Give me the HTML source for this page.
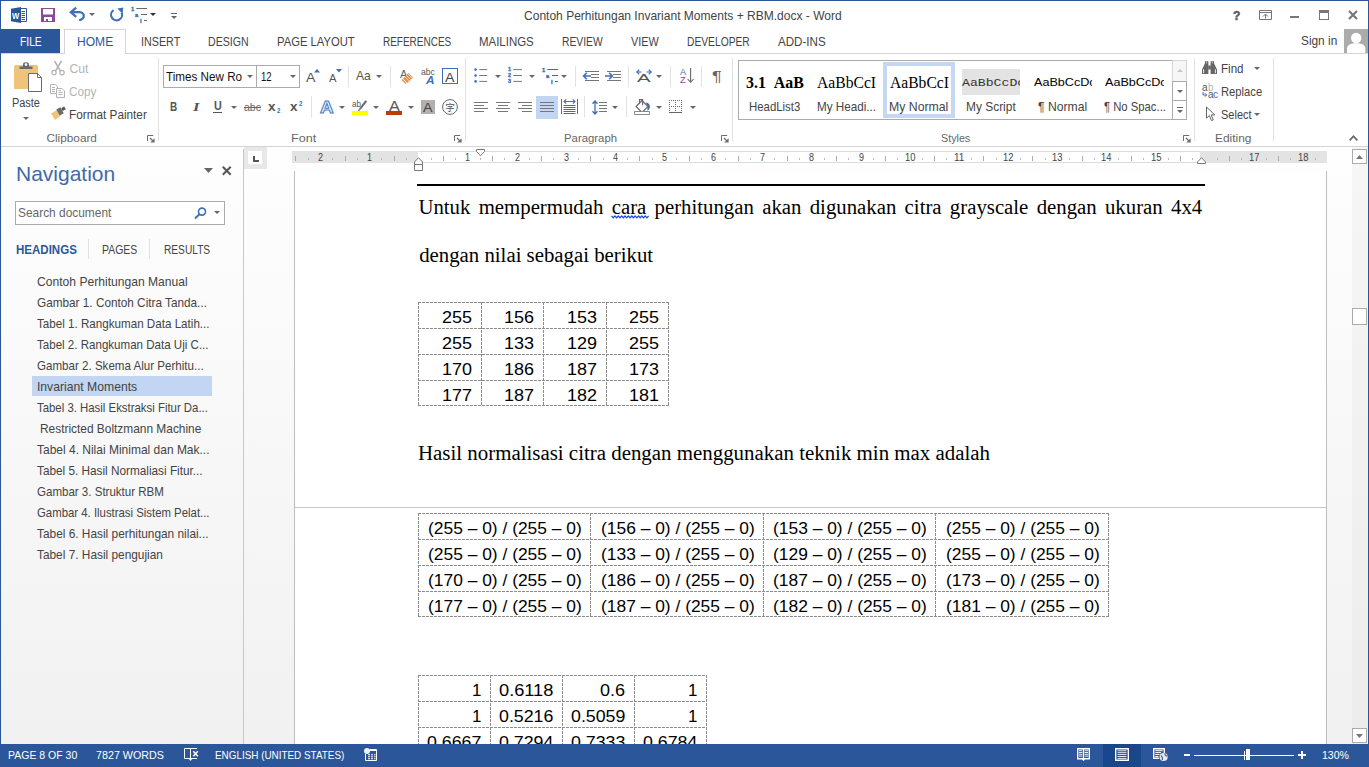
<!DOCTYPE html>
<html lang="en">
<head>
<meta charset="utf-8">
<title>Contoh Perhitungan Invariant Moments + RBM.docx - Word</title>
<style>
*{box-sizing:border-box;margin:0;padding:0}
html,body{width:1369px;height:767px;overflow:hidden;background:#fff}
body{font-family:"Liberation Sans",sans-serif;font-size:12px;color:#444;position:relative}
#win{position:absolute;left:0;top:0;width:1369px;height:767px;overflow:hidden;background:#fff}
.abs{position:absolute}
.t{position:absolute;white-space:nowrap;line-height:16px;height:16px;color:#444;transform-origin:0 50%}
svg{position:absolute;overflow:visible}
.dd{position:absolute;width:0;height:0;border-style:solid;border-color:transparent;border-bottom-width:0}
.gsep{position:absolute;top:58px;width:1px;height:83px;background:#e1e1e1}
.isep{position:absolute;width:1px;height:21px;background:#e1e1e1}
.dash{position:absolute;border:1px dashed #8c8c8c}
.cell{position:absolute;color:#000;white-space:nowrap;text-align:right}
</style>
</head>
<body>
<div id="win">
<!-- TITLE BAR -->
<div id="titlebar">
<div class="t" id="x1" style="left:524.134px;top:8.00px;font-size:12.2px;transform:scaleX(0.9871);">Contoh Perhitungan Invariant Moments + RBM.docx - Word</div>
<svg style="left:11px;top:7px" width="16" height="16" viewBox="0 0 16 16"><path d="M10 1.5H15.5V14.5H10" fill="#fff" stroke="#2b579a" stroke-width="1"/><path d="M10.5 4.5H14M10.5 6.5H14M10.5 8.5H14M10.5 10.5H14M10.5 12.5H14" stroke="#2b579a" stroke-width="1"/><path d="M0 1.7L10 0V16L0 14.3Z" fill="#2b579a"/></svg>
<div class="t" id="x2" style="left:12.4px;top:8.00px;font-size:8.6px;color:#fff;font-weight:bold;transform:scaleX(0.8862);">W</div>
<svg style="left:41px;top:8px" width="14" height="14" viewBox="0 0 14 14"><path d="M0 0H14V14H0Z" fill="#8a4a96"/><path d="M2 1H12V6.5H2Z" fill="#fff"/><path d="M3 9H11V13H3Z" fill="#fff"/><path d="M5 11H7V13H5Z" fill="#8a4a96"/></svg>
<svg style="left:70px;top:7px" width="16" height="15" viewBox="0 0 16 15"><path d="M2.2 5.2H9.5C12.6 5.2 13.8 7.4 13.8 9C13.8 11.4 11.6 12.6 9.2 13.2" fill="none" stroke="#3f6fb6" stroke-width="2.2"/><path d="M6.2 0.6L0.8 5.2L6.2 9.8" fill="none" stroke="#3f6fb6" stroke-width="2.2"/></svg>
<div class="dd" style="left:89.4px;top:12.8px;border-top-color:#666;border-left-width:3px;border-right-width:3px;border-top-width:3px"></div>
<svg style="left:109px;top:7px" width="16" height="15" viewBox="0 0 16 15"><path d="M4.6 3.2A5.5 5.5 0 1 0 12.6 5.6" fill="none" stroke="#3f6fb6" stroke-width="2.1"/><path d="M8.3 1.5L14.3 0.5L13.5 6.8Z" fill="#3f6fb6"/></svg>
<svg style="left:130px;top:6px" width="17" height="17" viewBox="0 0 17 17"><path d="M6.3 2.5H17M11 8.5H17M14 14.5H17" stroke="#666" stroke-width="1"/></svg>
<div class="t" id="x3" style="left:130.6px;top:1.00px;font-size:5.6px;color:#3f6fb6;font-weight:bold;transform:scaleX(1.0240);-webkit-text-stroke:0.35px #3f6fb6;">1</div>
<div class="t" id="x4" style="left:135px;top:7.00px;font-size:5.8px;color:#3f6fb6;font-weight:bold;transform:scaleX(0.9894);-webkit-text-stroke:0.35px #3f6fb6;">a</div>
<div class="t" id="x5" style="left:139.8px;top:13.00px;font-size:5.8px;color:#3f6fb6;font-weight:bold;transform:scaleX(0.9846);-webkit-text-stroke:0.35px #3f6fb6;">i</div>
<div class="dd" style="left:150.4px;top:12.8px;border-top-color:#333;border-left-width:3px;border-right-width:3px;border-top-width:3px"></div>
<div class="abs" style="left:171px;top:13px;width:6px;height:1px;background:#666;"></div>
<div class="dd" style="left:171px;top:16px;border-top-color:#666;border-left-width:3px;border-right-width:3px;border-top-width:3px"></div>
<div class="t" id="x6" style="left:1233px;top:7.00px;font-size:13.5px;color:#5a5a5a;font-weight:bold;line-height:17px;height:17px;transform:scaleX(0.8970);-webkit-text-stroke:0.5px #5a5a5a;">?</div>
<svg style="left:1259px;top:10px" width="13" height="10" viewBox="0 0 13 10"><path d="M0.5 0.5H12.5V9.5H0.5Z" fill="#fff" stroke="#777" stroke-width="1"/><path d="M0.5 2.5H12.5" stroke="#777"/><path d="M6.5 8.5V4.5M4 6.5L6.5 4L9 6.5" fill="none" stroke="#777" stroke-width="1"/></svg>
<div class="abs" style="left:1290px;top:16px;width:9px;height:2px;background:#777;"></div>
<div class="abs" style="left:1319px;top:10px;width:10px;height:10px;border:1px solid #777;border-top-width:3px;"></div>
<svg style="left:1348px;top:10px" width="10" height="10" viewBox="0 0 10 10"><path d="M1 1L9 9M9 1L1 9" stroke="#777" stroke-width="2.2"/></svg>
</div>
<!-- TABS -->
<div id="tabs">
<div class="abs" style="left:0px;top:29px;width:60px;height:24px;background:#2b579a;"></div>
<div class="abs" style="left:0px;top:53px;width:1369px;height:1px;background:#d4d4d4;"></div>
<div class="abs" style="left:64px;top:29px;width:62px;height:25px;background:#fff;border:1px solid #d4d4d4;border-bottom:0;"></div>
<div class="t" id="x7" style="left:19.64px;top:34.00px;font-size:12px;color:#fff;transform:scaleX(0.8570);">FILE</div>
<div class="t" id="x8" style="left:76.64px;top:34.00px;font-size:12px;color:#2b579a;transform:scaleX(1.0061);">HOME</div>
<div class="t" id="x9" style="left:140.64px;top:34.00px;font-size:12px;transform:scaleX(0.8955);">INSERT</div>
<div class="t" id="x10" style="left:207.64px;top:34.00px;font-size:12px;transform:scaleX(0.8849);">DESIGN</div>
<div class="t" id="x11" style="left:276.64px;top:34.00px;font-size:12px;transform:scaleX(0.9373);">PAGE LAYOUT</div>
<div class="t" id="x12" style="left:382.64px;top:34.00px;font-size:12px;transform:scaleX(0.8318);">REFERENCES</div>
<div class="t" id="x13" style="left:478.64px;top:34.00px;font-size:12px;transform:scaleX(0.9540);">MAILINGS</div>
<div class="t" id="x14" style="left:561.64px;top:34.00px;font-size:12px;transform:scaleX(0.8601);">REVIEW</div>
<div class="t" id="x15" style="left:630.64px;top:34.00px;font-size:12px;transform:scaleX(0.9038);">VIEW</div>
<div class="t" id="x16" style="left:686.64px;top:34.00px;font-size:12px;transform:scaleX(0.8550);">DEVELOPER</div>
<div class="t" id="x17" style="left:777.64px;top:34.00px;font-size:12px;transform:scaleX(0.9671);">ADD-INS</div>
<div class="t" id="x18" style="left:1300.63px;top:33.00px;font-size:12.3px;transform:scaleX(0.9635);">Sign in</div>
<svg style="left:1344px;top:29px" width="24" height="24" viewBox="0 0 24 24"><path d="M0 0H24V24H0Z" fill="#ababab"/><circle cx="12.2" cy="9" r="5.2" fill="#fff"/><path d="M3 24V20C3 15.5 7 14.2 12.2 14.2C17.4 14.2 21.4 15.5 21.4 20V24Z" fill="#fff"/></svg>
</div>
<!-- RIBBON -->
<div id="ribbon">
<div class="abs" style="left:0px;top:146px;width:1369px;height:1px;background:#d4d4d4;"></div>
<div id="grp-clipboard">
<svg style="left:13px;top:61px" width="30" height="32" viewBox="0 0 30 32"><path d="M1 5.5Q1 4 2.5 4H23.5Q25 4 25 5.5V28H1Z" fill="#f0c37a"/><path d="M6.5 8V5.5H10V3.5Q10 1.2 13 1.2Q16 1.2 16 3.5V5.5H19.5V8Z" fill="#6b6b6b"/><circle cx="13" cy="3.6" r="1.3" fill="#fff"/><path d="M15.5 12.5H24.5L28.5 16.5V30.5H15.5Z" fill="#fff" stroke="#6b6b6b" stroke-width="1"/><path d="M24.5 12.5V16.5H28.5" fill="none" stroke="#6b6b6b" stroke-width="1"/></svg>
<div class="t" id="x19" style="left:12.431px;top:95.00px;font-size:12.3px;transform:scaleX(0.8882);">Paste</div>
<div class="dd" style="left:22.7px;top:116.8px;border-top-color:#666;border-left-width:3px;border-right-width:3px;border-top-width:3px"></div>
<svg style="left:50px;top:60px" width="16" height="16" viewBox="0 0 16 16"><path d="M4.5 1L10.5 11M11.5 1L5.5 11" stroke="#b4b4b4" stroke-width="1.5" fill="none"/><circle cx="4" cy="12.6" r="2.2" fill="none" stroke="#b4b4b4" stroke-width="1.2"/><circle cx="12" cy="12.6" r="2.2" fill="none" stroke="#b4b4b4" stroke-width="1.2"/></svg>
<div class="t" id="x20" style="left:69.434px;top:61.00px;font-size:12.2px;color:#b4b4b4;">Cut</div>
<svg style="left:50px;top:84px" width="16" height="15" viewBox="0 0 16 15"><path d="M6.5 9.5H0.5V0.5H5.5L7.5 2.5V4" fill="none" stroke="#b4b4b4"/><path d="M2 3.5H5M2 5.5H5M2 7.5H5" stroke="#b4b4b4"/><path d="M6.5 4.5H12L14.5 7V13.5H6.5Z" fill="#fff" stroke="#b4b4b4"/><path d="M8.5 8.5H12.5M8.5 10.5H12.5M8.5 6.5H11" stroke="#b4b4b4"/></svg>
<div class="t" id="x21" style="left:69.434px;top:84.00px;font-size:12.2px;color:#b4b4b4;transform:scaleX(0.9641);">Copy</div>
<svg style="left:50px;top:106px" width="17" height="15" viewBox="0 0 17 15"><path d="M1 7.5L7 4L10.5 10L5 14Z" fill="#f0c37a"/><path d="M6.3 3.6L10.3 1.3L13.8 7.3L9.8 9.6Z" fill="#6b6b6b"/><path d="M11.2 2.2L14.2 0.4L15.8 3.2L12.8 5Z" fill="#555"/></svg>
<div class="t" id="x22" style="left:69.434px;top:107.00px;font-size:12.2px;transform:scaleX(0.9655);">Format Painter</div>
<div class="t" id="x23" style="left:46.446px;top:130.00px;font-size:11.8px;color:#666;">Clipboard</div>
<svg style="left:147px;top:135px" width="8" height="8" viewBox="0 0 8 8"><path d="M0.5 6V0.5H6.2" fill="none" stroke="#6e6e6e"/><path d="M3 3L6 6" stroke="#6e6e6e" stroke-width="1.2"/><path d="M7.6 3.2V7.6H3.2Z" fill="#6e6e6e"/></svg>
<div class="gsep" style="left:158px"></div>
</div>
<div id="grp-font">
<div class="abs" style="left:163px;top:65px;width:94px;height:23px;background:#fff;border:1px solid #ababab;"></div>
<div class="abs" style="left:256px;top:65px;width:44px;height:23px;background:#fff;border:1px solid #ababab;"></div>
<div class="t" id="x24" style="left:165.828px;top:69.00px;font-size:12.4px;color:#111;transform:scaleX(0.9414);">Times New Ro</div>
<div class="dd" style="left:246.5px;top:75px;border-top-color:#666;border-left-width:3px;border-right-width:3px;border-top-width:3px"></div>
<div class="t" id="x25" style="left:261px;top:69.00px;font-size:12.4px;color:#111;transform:scaleX(0.7683);">12</div>
<div class="dd" style="left:289.5px;top:75px;border-top-color:#666;border-left-width:3px;border-right-width:3px;border-top-width:3px"></div>
<div class="t" id="x26" style="left:306.2px;top:69.00px;font-size:13.2px;color:#555;line-height:17px;height:17px;transform:scaleX(1.0686);">A</div>
<svg style="left:314px;top:69px" width="6" height="3.5" viewBox="0 0 6 3.5"><path d="M0 3.5L3 0L6 3.5Z" fill="#3f6fb6"/></svg>
<div class="t" id="x27" style="left:329.2px;top:70.00px;font-size:10.4px;color:#555;line-height:17px;height:17px;transform:scaleX(1.0811);">A</div>
<svg style="left:336px;top:69px" width="6" height="3.5" viewBox="0 0 6 3.5"><path d="M0 0H6L3 3.5Z" fill="#3f6fb6"/></svg>
<div class="isep" style="left:348px;top:66px"></div>
<div class="t" id="x28" style="left:356.3px;top:68.00px;font-size:12.6px;color:#555;transform:scaleX(0.9671);">Aa</div>
<div class="dd" style="left:375.6px;top:75px;border-top-color:#666;border-left-width:3px;border-right-width:3px;border-top-width:3px"></div>
<div class="isep" style="left:390px;top:66px"></div>
<div class="t" id="x29" style="left:399.5px;top:66.00px;font-size:10.5px;color:#666;transform:scaleX(1.0690);">A</div>
<svg style="left:401px;top:71px" width="13" height="13" viewBox="0 0 13 13"><path d="M7.5 2L12 6.5L6.5 12L2 7.5Z" fill="#e8914a"/><path d="M5.5 4.5L9.5 8.5M4 6L8 10M7 3L11 7" stroke="#fff" stroke-width="0.6"/><path d="M1 8.5L5 12.5" stroke="#e8914a" stroke-width="1.4"/></svg>
<div class="t" id="x30" style="left:420.712px;top:63.00px;font-size:9.6px;color:#555;line-height:17px;height:17px;transform:scaleX(0.8906);">abc</div>
<div class="t" id="x31" style="left:426px;top:72.00px;font-size:11.5px;color:#3f6fb6;font-weight:bold;font-style:italic;transform:scaleX(1.0226);">A</div>
<div class="abs" style="left:442px;top:68px;width:16px;height:16px;background:#fff;border:1px solid #3f6fb6;"></div>
<div class="t" id="x32" style="left:445.3px;top:69.00px;font-size:13px;line-height:17px;height:17px;transform:scaleX(1.0955);">A</div>
<div class="gsep" style="left:465px"></div>
<div class="t" id="x33" style="left:169.8px;top:99.00px;font-size:12.4px;color:#555;font-weight:bold;transform:scaleX(0.8042);">B</div>
<div class="t" id="x34" style="left:192.5px;top:99.00px;font-size:12.6px;color:#555;font-weight:bold;font-style:italic;font-family:'Liberation Serif',serif;transform:scaleX(1.3248);">I</div>
<div class="t" id="x35" style="left:213.6px;top:98.00px;font-size:12px;color:#555;font-weight:bold;transform:scaleX(0.8995);">U</div>
<div class="abs" style="left:213.3px;top:112px;width:8.6px;height:1px;background:#555;"></div>
<div class="dd" style="left:231.3px;top:106px;border-top-color:#666;border-left-width:3px;border-right-width:3px;border-top-width:3px"></div>
<div class="t" id="x36" style="left:243.658px;top:99.00px;font-size:11.4px;color:#666;transform:scaleX(0.9189);">abc</div>
<div class="abs" style="left:243.5px;top:107px;width:17.5px;height:1px;background:#666;"></div>
<div class="t" id="x37" style="left:268px;top:98.00px;font-size:13.5px;color:#555;font-weight:bold;line-height:17px;height:17px;">x</div>
<div class="t" id="x38" style="left:277px;top:102.00px;font-size:6.5px;color:#3f6fb6;font-weight:bold;line-height:17px;height:17px;transform:scaleX(0.9379);">2</div>
<div class="t" id="x39" style="left:290px;top:98.00px;font-size:13.5px;color:#555;font-weight:bold;line-height:17px;height:17px;">x</div>
<div class="t" id="x40" style="left:299px;top:95.00px;font-size:6.5px;color:#3f6fb6;font-weight:bold;line-height:17px;height:17px;transform:scaleX(0.9379);">2</div>
<div class="isep" style="left:311px;top:96px"></div>
<div class="t" id="x41" style="left:320.2px;top:96.00px;font-size:17px;color:#fff;font-weight:bold;line-height:23px;height:23px;transform:scaleX(1.1074);-webkit-text-stroke:1px #4a7ac0;">A</div>
<div class="dd" style="left:338.6px;top:106.1px;border-top-color:#666;border-left-width:3px;border-right-width:3px;border-top-width:3px"></div>
<div class="t" id="x42" style="left:352px;top:95.00px;font-size:9.6px;color:#555;line-height:17px;height:17px;transform:scaleX(0.8433);">ab</div>
<svg style="left:355px;top:100px" width="13" height="12" viewBox="0 0 13 12"><path d="M11.2 0.8L5 9" stroke="#666" stroke-width="2"/><path d="M5.5 8.3L3.2 11.2" stroke="#888" stroke-width="1.6"/></svg>
<div class="abs" style="left:352px;top:111px;width:16px;height:4px;background:#ffff00;"></div>
<div class="dd" style="left:373.4px;top:106.1px;border-top-color:#666;border-left-width:3px;border-right-width:3px;border-top-width:3px"></div>
<div class="t" id="x43" style="left:388.6px;top:98.00px;font-size:14px;color:#555;transform:scaleX(1.1559);">A</div>
<div class="abs" style="left:386px;top:111px;width:16px;height:4px;background:#c03a0e;"></div>
<div class="dd" style="left:407.5px;top:106.1px;border-top-color:#666;border-left-width:3px;border-right-width:3px;border-top-width:3px"></div>
<div class="abs" style="left:421px;top:100px;width:14px;height:14px;background:#b1b1b1;"></div>
<div class="t" id="x44" style="left:423.3px;top:99.00px;font-size:13px;line-height:17px;height:17px;transform:scaleX(1.0955);">A</div>
<svg style="left:442px;top:99px" width="16" height="16" viewBox="0 0 16 16"><circle cx="8" cy="8" r="7.4" fill="#fff" stroke="#666" stroke-width="1"/></svg>
<div class="t" id="x45" style="left:445.2px;top:99.00px;font-size:9.6px;color:#555;line-height:17px;height:17px;font-family:'Noto Sans CJK SC',sans-serif;">字</div>
<div class="t" id="x46" style="left:291.146px;top:130.00px;font-size:11.8px;color:#666;transform:scaleX(1.0677);">Font</div>
<svg style="left:454px;top:135px" width="8" height="8" viewBox="0 0 8 8"><path d="M0.5 6V0.5H6.2" fill="none" stroke="#6e6e6e"/><path d="M3 3L6 6" stroke="#6e6e6e" stroke-width="1.2"/><path d="M7.6 3.2V7.6H3.2Z" fill="#6e6e6e"/></svg>
</div>
<div id="grp-paragraph">
<svg style="left:474px;top:68px" width="14" height="15" viewBox="0 0 14 15"><circle cx="1.6" cy="1.6" r="1.3" fill="#3f6fb6"/><circle cx="1.6" cy="7.5" r="1.3" fill="#3f6fb6"/><circle cx="1.6" cy="13.4" r="1.3" fill="#3f6fb6"/><path d="M5.3 1.6H13.2" stroke="#777" stroke-width="1"/><path d="M5.3 7.5H13.2" stroke="#777" stroke-width="1"/><path d="M5.3 13.4H13.2" stroke="#777" stroke-width="1"/></svg>
<div class="dd" style="left:494.5px;top:75px;border-top-color:#666;border-left-width:3px;border-right-width:3px;border-top-width:3px"></div>
<svg style="left:508px;top:68px" width="14" height="15" viewBox="0 0 14 15"><path d="M5.3 1.6H14" stroke="#777" stroke-width="1"/><path d="M5.3 7.5H14" stroke="#777" stroke-width="1"/><path d="M5.3 13.4H14" stroke="#777" stroke-width="1"/></svg>
<div class="t" id="x47" style="left:508px;top:61.00px;font-size:5.6px;color:#3f6fb6;font-weight:bold;transform:scaleX(0.9600);-webkit-text-stroke:0.35px #3f6fb6;">1</div>
<div class="t" id="x48" style="left:508px;top:67.00px;font-size:5.6px;color:#3f6fb6;font-weight:bold;transform:scaleX(0.9600);-webkit-text-stroke:0.35px #3f6fb6;">2</div>
<div class="t" id="x49" style="left:508px;top:73.00px;font-size:5.6px;color:#3f6fb6;font-weight:bold;transform:scaleX(0.9600);-webkit-text-stroke:0.35px #3f6fb6;">3</div>
<div class="dd" style="left:528.5px;top:75px;border-top-color:#666;border-left-width:3px;border-right-width:3px;border-top-width:3px"></div>
<svg style="left:541px;top:67.2px" width="17" height="17" viewBox="0 0 17 17"><path d="M6.3 2.5H17M11 8.5H17M14 14.5H17" stroke="#666" stroke-width="1"/></svg>
<div class="t" id="x50" style="left:541.6px;top:62.00px;font-size:5.6px;color:#3f6fb6;font-weight:bold;transform:scaleX(1.0240);-webkit-text-stroke:0.35px #3f6fb6;">1</div>
<div class="t" id="x51" style="left:546px;top:68.00px;font-size:5.8px;color:#3f6fb6;font-weight:bold;transform:scaleX(0.9894);-webkit-text-stroke:0.35px #3f6fb6;">a</div>
<div class="t" id="x52" style="left:550.8px;top:74.00px;font-size:5.8px;color:#3f6fb6;font-weight:bold;transform:scaleX(0.9846);-webkit-text-stroke:0.35px #3f6fb6;">i</div>
<div class="dd" style="left:560.5px;top:75px;border-top-color:#666;border-left-width:3px;border-right-width:3px;border-top-width:3px"></div>
<div class="isep" style="left:575px;top:66px"></div>
<svg style="left:583px;top:70px" width="16" height="12" viewBox="0 0 16 12"><path d="M2 1.5H16" stroke="#777" stroke-width="1"/><path d="M2 10.5H16" stroke="#777" stroke-width="1"/><path d="M8 4.5H16" stroke="#777" stroke-width="1"/><path d="M8 7.5H16" stroke="#777" stroke-width="1"/><path d="M0.5 6H8M3.8 2.8L0.6 6L3.8 9.2" fill="none" stroke="#3f6fb6" stroke-width="1.6"/></svg>
<svg style="left:605px;top:70px" width="16" height="12" viewBox="0 0 16 12"><path d="M2 1.5H16" stroke="#777" stroke-width="1"/><path d="M2 10.5H16" stroke="#777" stroke-width="1"/><path d="M8 4.5H16" stroke="#777" stroke-width="1"/><path d="M8 7.5H16" stroke="#777" stroke-width="1"/><path d="M0 6H7M4.2 2.8L7.4 6L4.2 9.2" fill="none" stroke="#3f6fb6" stroke-width="1.6"/></svg>
<div class="isep" style="left:628px;top:66px"></div>
<div class="t" id="x53" style="left:637.4px;top:70.00px;font-size:11.6px;color:#555;transform:scaleX(1.7584);">A</div>
<svg style="left:636px;top:69px" width="16" height="6" viewBox="0 0 16 6"><path d="M0.8 3H5.5M3.3 0.6L0.8 3L3.3 5.4M15.2 3H10.5M12.7 0.6L15.2 3L12.7 5.4" fill="none" stroke="#3f6fb6" stroke-width="1.2"/></svg>
<div class="dd" style="left:655.8px;top:75px;border-top-color:#666;border-left-width:3px;border-right-width:3px;border-top-width:3px"></div>
<div class="isep" style="left:670px;top:66px"></div>
<div class="t" id="x54" style="left:679.6px;top:64.00px;font-size:8.6px;color:#3f6fb6;transform:scaleX(1.0463);">A</div>
<div class="t" id="x55" style="left:679.8px;top:72.00px;font-size:8.6px;color:#8a4a96;transform:scaleX(1.0667);">Z</div>
<svg style="left:687px;top:68px" width="8" height="16" viewBox="0 0 8 16"><path d="M3.6 0V14M0.6 11L3.6 14.3L6.6 11" fill="none" stroke="#666" stroke-width="1.1"/></svg>
<div class="isep" style="left:701px;top:66px"></div>
<div class="t" id="x56" style="left:712px;top:68.00px;font-size:14.5px;color:#666;transform:scaleX(1.2569);">¶</div>
<svg style="left:474px;top:100px" width="14" height="14" viewBox="0 0 14 14"><path d="M0 2.5H14" stroke="#777"/><path d="M0 5.5H10" stroke="#777"/><path d="M0 8.5H14" stroke="#777"/><path d="M0 11.5H10" stroke="#777"/></svg>
<svg style="left:496px;top:100px" width="14" height="14" viewBox="0 0 14 14"><path d="M0 2.5H14" stroke="#777"/><path d="M2 5.5H12" stroke="#777"/><path d="M0 8.5H14" stroke="#777"/><path d="M2 11.5H12" stroke="#777"/></svg>
<svg style="left:518px;top:100px" width="14" height="14" viewBox="0 0 14 14"><path d="M0 2.5H14" stroke="#777"/><path d="M4 5.5H14" stroke="#777"/><path d="M0 8.5H14" stroke="#777"/><path d="M4 11.5H14" stroke="#777"/></svg>
<div class="abs" style="left:536px;top:96px;width:22px;height:23px;background:#c2d5f2;"></div>
<svg style="left:540px;top:100px" width="14" height="14" viewBox="0 0 14 14"><path d="M0 2.5H14" stroke="#777"/><path d="M0 5.5H14" stroke="#777"/><path d="M0 8.5H14" stroke="#777"/><path d="M0 11.5H14" stroke="#777"/></svg>
<svg style="left:560.5px;top:99px" width="17" height="15" viewBox="0 0 17 15"><path d="M0.5 0V15M16.5 0V15" stroke="#3f6fb6" stroke-width="1"/><path d="M3 2.5H14M5.2 0.4L3 2.5L5.2 4.6M11.8 0.4L14 2.5L11.8 4.6" fill="none" stroke="#3f6fb6" stroke-width="1.1"/><path d="M2.5 6.5H14.5" stroke="#666" stroke-width="1"/><path d="M2.5 8.5H14.5" stroke="#666" stroke-width="1"/><path d="M2.5 10.5H14.5" stroke="#666" stroke-width="1"/><path d="M2.5 12.5H14.5" stroke="#666" stroke-width="1"/><path d="M2.5 14.5H14.5" stroke="#666" stroke-width="1"/></svg>
<div class="isep" style="left:584px;top:96px"></div>
<svg style="left:592px;top:100px" width="16" height="15" viewBox="0 0 16 15"><path d="M3 1V14M0.5 3.8L3 1L5.5 3.8M0.5 11.2L3 14L5.5 11.2" fill="none" stroke="#3f6fb6" stroke-width="1.3"/><path d="M7 2.5H15" stroke="#777" stroke-width="1"/><path d="M7 5.5H15" stroke="#777" stroke-width="1"/><path d="M7 8.5H15" stroke="#777" stroke-width="1"/><path d="M7 11.5H15" stroke="#777" stroke-width="1"/></svg>
<div class="dd" style="left:611.5px;top:106.1px;border-top-color:#666;border-left-width:3px;border-right-width:3px;border-top-width:3px"></div>
<div class="isep" style="left:626px;top:96px"></div>
<svg style="left:634px;top:99px" width="16" height="16" viewBox="0 0 16 16"><path d="M11.8 3.6Q16.6 4.2 15.8 9Q15 11 13.4 11.8L13.4 8Z" fill="#3f6fb6"/><path d="M2 7.5L8 1.5L14 7.5L8 13.5Z" fill="#fff" stroke="#666" stroke-width="1.1"/><path d="M5.5 4.6V0.6H8.6V6.2" fill="none" stroke="#666" stroke-width="1.1"/><path d="M0.5 12.5H15.5V15.5H0.5Z" fill="#fff" stroke="#888" stroke-width="1"/></svg>
<div class="dd" style="left:655.8px;top:106.1px;border-top-color:#666;border-left-width:3px;border-right-width:3px;border-top-width:3px"></div>
<svg style="left:669px;top:100px" width="13" height="13" viewBox="0 0 13 13"><path d="M0 0h1v1h-1zM2 0h1v1h-1zM4 0h1v1h-1zM6 0h1v1h-1zM8 0h1v1h-1zM10 0h1v1h-1zM12 0h1v1h-1zM0 6h1v1h-1zM2 6h1v1h-1zM4 6h1v1h-1zM6 6h1v1h-1zM8 6h1v1h-1zM10 6h1v1h-1zM12 6h1v1h-1zM0 0h1v1h-1zM0 2h1v1h-1zM0 4h1v1h-1zM0 6h1v1h-1zM0 8h1v1h-1zM0 10h1v1h-1zM6 0h1v1h-1zM6 2h1v1h-1zM6 4h1v1h-1zM6 6h1v1h-1zM6 8h1v1h-1zM6 10h1v1h-1zM12 0h1v1h-1zM12 2h1v1h-1zM12 4h1v1h-1zM12 6h1v1h-1zM12 8h1v1h-1zM12 10h1v1h-1z" fill="#6a6a6a" shape-rendering="crispEdges"/><path d="M0 12.5H13" stroke="#666" stroke-width="1" shape-rendering="crispEdges"/></svg>
<div class="dd" style="left:689.7px;top:106.1px;border-top-color:#666;border-left-width:3px;border-right-width:3px;border-top-width:3px"></div>
<div class="t" id="x57" style="left:563.846px;top:130.00px;font-size:11.8px;color:#666;transform:scaleX(0.9621);">Paragraph</div>
<svg style="left:721px;top:135px" width="8" height="8" viewBox="0 0 8 8"><path d="M0.5 6V0.5H6.2" fill="none" stroke="#6e6e6e"/><path d="M3 3L6 6" stroke="#6e6e6e" stroke-width="1.2"/><path d="M7.6 3.2V7.6H3.2Z" fill="#6e6e6e"/></svg>
<div class="gsep" style="left:732px"></div>
</div>
<div id="grp-styles">
<div class="abs" style="left:738px;top:60px;width:449px;height:60px;background:#fff;border:1px solid #ababab;"></div>
<div class="abs" style="left:745px;top:66px;width:59px;height:30px;overflow:hidden"><div class="t" id="x58" style="left:0.52px;top:6.00px;font-size:16px;color:#000;font-weight:bold;font-family:'Liberation Serif',serif;line-height:21px;height:21px;transform:scaleX(0.9934);">3.1  AaBl</div>
</div>
<div class="t" id="x59" style="left:817.22px;top:72.00px;font-size:16px;color:#000;font-family:'Liberation Serif',serif;line-height:21px;height:21px;transform:scaleX(0.9772);">AaBbCcI</div>
<div class="abs" style="left:883px;top:62px;width:72px;height:56px;background:#fff;border:4px solid #c5d7f3;"></div>
<div class="t" id="x60" style="left:889.52px;top:72.00px;font-size:16px;color:#000;font-family:'Liberation Serif',serif;line-height:21px;height:21px;transform:scaleX(0.9756);">AaBbCcI</div>
<div class="abs" style="left:962px;top:69px;width:58px;height:26px;background:#e3e3e3;"></div>
<div class="abs" style="left:962px;top:69px;width:58px;height:26px;overflow:hidden"><div class="t" id="x61" style="left:-0.348px;top:6.00px;font-size:11.6px;color:#333;transform:scaleX(1.1352);font-family:'Liberation Mono',monospace;">AaBbCcDc</div>
</div>
<div class="abs" style="left:1030px;top:69px;width:62px;height:26px;overflow:hidden"><div class="t" id="x62" style="left:3.658px;top:5.00px;font-size:11.4px;color:#000;transform:scaleX(1.1071);">AaBbCcDc</div>
</div>
<div class="abs" style="left:1102px;top:69px;width:62px;height:26px;overflow:hidden"><div class="t" id="x63" style="left:3.458px;top:5.00px;font-size:11.4px;color:#000;transform:scaleX(1.1071);">AaBbCcDc</div>
</div>
<div class="t" id="x64" style="left:749.237px;top:99.00px;font-size:12.1px;transform:scaleX(0.9423);">HeadList3</div>
<div class="t" id="x65" style="left:817.337px;top:99.00px;font-size:12.1px;transform:scaleX(0.9666);">My Headi...</div>
<div class="t" id="x66" style="left:889.437px;top:99.00px;font-size:12.1px;transform:scaleX(1.0147);">My Normal</div>
<div class="t" id="x67" style="left:966.037px;top:99.00px;font-size:12.1px;transform:scaleX(0.9865);">My Script</div>
<div class="t" id="x68" style="left:1037.84px;top:99.00px;font-size:12.1px;transform:scaleX(1.0058);">¶ Normal</div>
<div class="t" id="x69" style="left:1103.94px;top:99.00px;font-size:12.1px;transform:scaleX(0.9336);">¶ No Spac...</div>
<div class="abs" style="left:1172px;top:60px;width:15px;height:22px;background:#f6f6f6;border:1px solid #d6d6d6;"></div>
<div class="abs" style="left:1172px;top:81px;width:15px;height:20px;background:#fff;border:1px solid #ababab;"></div>
<div class="abs" style="left:1172px;top:100px;width:15px;height:20px;background:#fff;border:1px solid #ababab;"></div>
<svg style="left:1176.5px;top:69px" width="6" height="3" viewBox="0 0 6 3"><path d="M0 3L3 0L6 3Z" fill="#c6c6c6"/></svg>
<div class="dd" style="left:1176.5px;top:89.5px;border-top-color:#666;border-left-width:3px;border-right-width:3px;border-top-width:3px"></div>
<div class="abs" style="left:1176.5px;top:107px;width:6px;height:1px;background:#666;"></div>
<div class="dd" style="left:1176.5px;top:110px;border-top-color:#666;border-left-width:3px;border-right-width:3px;border-top-width:3px"></div>
<div class="t" id="x70" style="left:940.646px;top:130.00px;font-size:11.8px;color:#666;transform:scaleX(0.9092);">Styles</div>
<svg style="left:1183px;top:135px" width="8" height="8" viewBox="0 0 8 8"><path d="M0.5 6V0.5H6.2" fill="none" stroke="#6e6e6e"/><path d="M3 3L6 6" stroke="#6e6e6e" stroke-width="1.2"/><path d="M7.6 3.2V7.6H3.2Z" fill="#6e6e6e"/></svg>
<div class="gsep" style="left:1194px"></div>
</div>
<div id="grp-editing">
<svg style="left:1202px;top:61px" width="15" height="13" viewBox="0 0 15 13"><path d="M2.9 0.2H6.4V13H0V8.5L2.9 2.6Z" fill="#666"/><path d="M8.6 0.2H12.1V2.6L15 8.5V13H8.6Z" fill="#666"/><path d="M6.2 4.5H8.8V8.5H6.2Z" fill="#666"/><path d="M1.6 8.3V12.2M13.4 8.3V12.2" stroke="#fff" stroke-width="0.9"/><path d="M4.6 0.8V2.4M10.4 0.8V2.4" stroke="#fff" stroke-width="0.6"/></svg>
<div class="t" id="x71" style="left:1221.43px;top:61.00px;font-size:12.2px;transform:scaleX(0.9500);">Find</div>
<div class="dd" style="left:1253.5px;top:66.8px;border-top-color:#666;border-left-width:3px;border-right-width:3px;border-top-width:3px"></div>
<div class="t" id="x72" style="left:1202px;top:79.00px;font-size:10.6px;color:#555;transform:scaleX(0.9481);">a</div>
<div class="t" id="x73" style="left:1208px;top:79.00px;font-size:10.6px;color:#b4b4b4;transform:scaleX(0.9143);">b</div>
<div class="t" id="x74" style="left:1207.5px;top:86.00px;font-size:10.6px;color:#555;transform:scaleX(0.9312);">a</div>
<div class="t" id="x75" style="left:1213.4px;top:86.00px;font-size:10.6px;color:#3f6fb6;transform:scaleX(0.9440);">c</div>
<svg style="left:1202px;top:92px" width="5" height="5" viewBox="0 0 5 5"><path d="M1 0V3H4.5M3 1.3L4.7 3L3 4.7" fill="none" stroke="#3f6fb6" stroke-width="1"/></svg>
<div class="t" id="x76" style="left:1221.43px;top:84.00px;font-size:12.2px;transform:scaleX(0.9198);">Replace</div>
<svg style="left:1205px;top:106px" width="11" height="16" viewBox="0 0 11 16"><path d="M1.5 1V12.2L4.3 9.6L6.5 14.6L8.3 13.8L6.1 8.9H9.8Z" fill="#fff" stroke="#666" stroke-width="1" stroke-linejoin="miter"/></svg>
<div class="t" id="x77" style="left:1221.23px;top:107.00px;font-size:12.2px;transform:scaleX(0.9043);">Select</div>
<div class="dd" style="left:1254.4px;top:113.1px;border-top-color:#666;border-left-width:3px;border-right-width:3px;border-top-width:3px"></div>
<div class="t" id="x78" style="left:1215.45px;top:130.00px;font-size:11.8px;color:#666;transform:scaleX(1.0091);">Editing</div>
<div class="gsep" style="left:1273px"></div>
<svg style="left:1349px;top:135px" width="9" height="6" viewBox="0 0 9 6"><path d="M0.7 5.3L4.5 1.2L8.3 5.3" fill="none" stroke="#666" stroke-width="1.7"/></svg>
</div>
</div>
<!-- NAVIGATION PANE -->
<div id="navpane">
<div class="abs" style="left:1px;top:147px;width:242px;height:597px;background:linear-gradient(180deg,#fefefe 0%,#f9f9f9 40%,#f1f1f1 100%);"></div>
<div class="abs" style="left:243px;top:149px;width:1px;height:595px;background:#c8c8c8;"></div>
<div class="t" id="x79" style="left:15.591px;top:160.00px;font-size:20.3px;color:#4069a8;line-height:28px;height:28px;transform:scaleX(1.0352);">Navigation</div>
<svg style="left:204px;top:168px" width="9" height="5" viewBox="0 0 9 5"><path d="M0 0H9L4.5 5Z" fill="#666"/></svg>
<svg style="left:221.5px;top:165.5px" width="9.5" height="9.5" viewBox="0 0 9.5 9.5"><path d="M0.8 0.8L8.7 8.7M8.7 0.8L0.8 8.7" stroke="#555" stroke-width="2"/></svg>
<div class="abs" style="left:15px;top:201px;width:210px;height:24px;background:#fff;border:1px solid #ababab;"></div>
<div class="t" id="x80" style="left:18.034px;top:205.00px;font-size:12.2px;color:#666;transform:scaleX(0.9770);">Search document</div>
<svg style="left:194px;top:207px" width="13" height="12" viewBox="0 0 13 12"><circle cx="8" cy="4.6" r="3.5" fill="none" stroke="#3f6fb6" stroke-width="1.6"/><path d="M5.4 7.3L1 11.4" stroke="#3f6fb6" stroke-width="2"/></svg>
<div class="dd" style="left:214.4px;top:211.1px;border-top-color:#666;border-left-width:3px;border-right-width:3px;border-top-width:3px"></div>
<div class="t" id="x81" style="left:16.14px;top:242.00px;font-size:12px;color:#2b579a;font-weight:bold;transform:scaleX(0.9602);">HEADINGS</div>
<div class="abs" style="left:88px;top:239px;width:1px;height:20px;background:#e1e1e1;"></div>
<div class="t" id="x82" style="left:102.04px;top:242.00px;font-size:12px;transform:scaleX(0.8703);">PAGES</div>
<div class="abs" style="left:149px;top:239px;width:1px;height:20px;background:#e1e1e1;"></div>
<div class="t" id="x83" style="left:163.94px;top:242.00px;font-size:12px;transform:scaleX(0.8467);">RESULTS</div>
<div class="abs" style="left:32px;top:376px;width:180px;height:20px;background:#c2d5f2;"></div>
<div class="t" id="x84" style="left:36.934px;top:274.00px;font-size:12.2px;transform:scaleX(0.9931);">Contoh Perhitungan Manual</div>
<div class="t" id="x85" style="left:36.934px;top:295.00px;font-size:12.2px;transform:scaleX(0.9660);">Gambar 1. Contoh Citra Tanda...</div>
<div class="t" id="x86" style="left:36.934px;top:316.00px;font-size:12.2px;transform:scaleX(0.9538);">Tabel 1. Rangkuman Data Latih...</div>
<div class="t" id="x87" style="left:36.934px;top:337.00px;font-size:12.2px;transform:scaleX(0.9483);">Tabel 2. Rangkuman Data Uji C...</div>
<div class="t" id="x88" style="left:36.934px;top:358.00px;font-size:12.2px;transform:scaleX(0.9497);">Gambar 2. Skema Alur Perhitu...</div>
<div class="t" id="x89" style="left:36.934px;top:379.00px;font-size:12.2px;">Invariant Moments</div>
<div class="t" id="x90" style="left:36.934px;top:400.00px;font-size:12.2px;transform:scaleX(0.9347);">Tabel 3. Hasil Ekstraksi Fitur Da...</div>
<div class="t" id="x91" style="left:40.234px;top:421.00px;font-size:12.2px;transform:scaleX(0.9761);">Restricted Boltzmann Machine</div>
<div class="t" id="x92" style="left:36.934px;top:442.00px;font-size:12.2px;transform:scaleX(0.9834);">Tabel 4. Nilai Minimal dan Mak...</div>
<div class="t" id="x93" style="left:36.934px;top:463.00px;font-size:12.2px;transform:scaleX(0.9666);">Tabel 5. Hasil Normaliasi Fitur...</div>
<div class="t" id="x94" style="left:36.934px;top:484.00px;font-size:12.2px;transform:scaleX(0.9465);">Gambar 3. Struktur RBM</div>
<div class="t" id="x95" style="left:36.934px;top:505.00px;font-size:12.2px;transform:scaleX(0.9330);">Gambar 4. Ilustrasi Sistem Pelat...</div>
<div class="t" id="x96" style="left:36.934px;top:526.00px;font-size:12.2px;transform:scaleX(0.9737);">Tabel 6. Hasil perhitungan nilai...</div>
<div class="t" id="x97" style="left:36.934px;top:547.00px;font-size:12.2px;transform:scaleX(0.9730);">Tabel 7. Hasil pengujian</div>
</div>
<!-- DOCUMENT AREA -->
<div id="docarea">
<div class="abs" style="left:244px;top:147px;width:1108px;height:597px;background:linear-gradient(180deg,#fefefe 0%,#f9f9f9 40%,#f1f1f1 100%);"></div>
<div class="abs" style="left:244px;top:147px;width:23px;height:22px;background:#e8e8e8;"></div>
<div class="abs" style="left:248px;top:151px;width:14px;height:13px;background:#fff;"></div>
<svg style="left:253px;top:156px" width="6" height="6" viewBox="0 0 6 6"><path d="M1 0V5H6" fill="none" stroke="#555" stroke-width="2"/></svg>
<div id="ruler">
<div class="abs" style="left:292px;top:151px;width:1035px;height:12px;background:#fff;border-top:1px solid #dcdcdc;border-bottom:1px solid #dcdcdc;"></div>
<div class="abs" style="left:292px;top:151px;width:126px;height:12px;background:#e3e3e3;"></div>
<div class="abs" style="left:1200px;top:151px;width:127px;height:12px;background:#e3e3e3;"></div>
<svg style="left:292px;top:0px" width="1035" height="170" viewBox="0 0 1035 170"><path d="M3.5 156V161" stroke="#a4acbc" stroke-width="1"/><path d="M16.5 158V160" stroke="#b4b9c6" stroke-width="1"/><path d="M40.5 158V160" stroke="#b4b9c6" stroke-width="1"/><path d="M53.5 156V161" stroke="#a4acbc" stroke-width="1"/><path d="M65.5 158V160" stroke="#b4b9c6" stroke-width="1"/><path d="M89.5 158V160" stroke="#b4b9c6" stroke-width="1"/><path d="M102.5 156V161" stroke="#a4acbc" stroke-width="1"/><path d="M114.5 158V160" stroke="#b4b9c6" stroke-width="1"/><path d="M139.5 158V160" stroke="#b4b9c6" stroke-width="1"/><path d="M151.5 156V161" stroke="#a4acbc" stroke-width="1"/><path d="M163.5 158V160" stroke="#b4b9c6" stroke-width="1"/><path d="M188.5 158V160" stroke="#b4b9c6" stroke-width="1"/><path d="M200.5 156V161" stroke="#a4acbc" stroke-width="1"/><path d="M212.5 158V160" stroke="#b4b9c6" stroke-width="1"/><path d="M237.5 158V160" stroke="#b4b9c6" stroke-width="1"/><path d="M249.5 156V161" stroke="#a4acbc" stroke-width="1"/><path d="M261.5 158V160" stroke="#b4b9c6" stroke-width="1"/><path d="M286.5 158V160" stroke="#b4b9c6" stroke-width="1"/><path d="M298.5 156V161" stroke="#a4acbc" stroke-width="1"/><path d="M311.5 158V160" stroke="#b4b9c6" stroke-width="1"/><path d="M335.5 158V160" stroke="#b4b9c6" stroke-width="1"/><path d="M347.5 156V161" stroke="#a4acbc" stroke-width="1"/><path d="M360.5 158V160" stroke="#b4b9c6" stroke-width="1"/><path d="M384.5 158V160" stroke="#b4b9c6" stroke-width="1"/><path d="M397.5 156V161" stroke="#a4acbc" stroke-width="1"/><path d="M409.5 158V160" stroke="#b4b9c6" stroke-width="1"/><path d="M433.5 158V160" stroke="#b4b9c6" stroke-width="1"/><path d="M446.5 156V161" stroke="#a4acbc" stroke-width="1"/><path d="M458.5 158V160" stroke="#b4b9c6" stroke-width="1"/><path d="M482.5 158V160" stroke="#b4b9c6" stroke-width="1"/><path d="M495.5 156V161" stroke="#a4acbc" stroke-width="1"/><path d="M507.5 158V160" stroke="#b4b9c6" stroke-width="1"/><path d="M532.5 158V160" stroke="#b4b9c6" stroke-width="1"/><path d="M544.5 156V161" stroke="#a4acbc" stroke-width="1"/><path d="M556.5 158V160" stroke="#b4b9c6" stroke-width="1"/><path d="M581.5 158V160" stroke="#b4b9c6" stroke-width="1"/><path d="M593.5 156V161" stroke="#a4acbc" stroke-width="1"/><path d="M605.5 158V160" stroke="#b4b9c6" stroke-width="1"/><path d="M630.5 158V160" stroke="#b4b9c6" stroke-width="1"/><path d="M642.5 156V161" stroke="#a4acbc" stroke-width="1"/><path d="M654.5 158V160" stroke="#b4b9c6" stroke-width="1"/><path d="M679.5 158V160" stroke="#b4b9c6" stroke-width="1"/><path d="M691.5 156V161" stroke="#a4acbc" stroke-width="1"/><path d="M704.5 158V160" stroke="#b4b9c6" stroke-width="1"/><path d="M728.5 158V160" stroke="#b4b9c6" stroke-width="1"/><path d="M740.5 156V161" stroke="#a4acbc" stroke-width="1"/><path d="M753.5 158V160" stroke="#b4b9c6" stroke-width="1"/><path d="M777.5 158V160" stroke="#b4b9c6" stroke-width="1"/><path d="M790.5 156V161" stroke="#a4acbc" stroke-width="1"/><path d="M802.5 158V160" stroke="#b4b9c6" stroke-width="1"/><path d="M826.5 158V160" stroke="#b4b9c6" stroke-width="1"/><path d="M839.5 156V161" stroke="#a4acbc" stroke-width="1"/><path d="M851.5 158V160" stroke="#b4b9c6" stroke-width="1"/><path d="M876.5 158V160" stroke="#b4b9c6" stroke-width="1"/><path d="M888.5 156V161" stroke="#a4acbc" stroke-width="1"/><path d="M900.5 158V160" stroke="#b4b9c6" stroke-width="1"/><path d="M925.5 158V160" stroke="#b4b9c6" stroke-width="1"/><path d="M937.5 156V161" stroke="#a4acbc" stroke-width="1"/><path d="M949.5 158V160" stroke="#b4b9c6" stroke-width="1"/><path d="M974.5 158V160" stroke="#b4b9c6" stroke-width="1"/><path d="M986.5 156V161" stroke="#a4acbc" stroke-width="1"/><path d="M998.5 158V160" stroke="#b4b9c6" stroke-width="1"/><path d="M1023.5 158V160" stroke="#b4b9c6" stroke-width="1"/></svg>
<div class="t" id="x98" style="left:318px;top:149.00px;font-size:10.3px;line-height:17px;height:17px;transform:scaleX(0.8719);">2</div>
<div class="t" id="x99" style="left:367.2px;top:149.00px;font-size:10.3px;line-height:17px;height:17px;transform:scaleX(0.8719);">1</div>
<div class="t" id="x100" style="left:465.4px;top:149.00px;font-size:10.3px;line-height:17px;height:17px;transform:scaleX(0.8719);">1</div>
<div class="t" id="x101" style="left:514.6px;top:149.00px;font-size:10.3px;line-height:17px;height:17px;transform:scaleX(0.8719);">2</div>
<div class="t" id="x102" style="left:563.7px;top:149.00px;font-size:10.3px;line-height:17px;height:17px;transform:scaleX(0.8719);">3</div>
<div class="t" id="x103" style="left:612.8px;top:149.00px;font-size:10.3px;line-height:17px;height:17px;transform:scaleX(0.8719);">4</div>
<div class="t" id="x104" style="left:662px;top:149.00px;font-size:10.3px;line-height:17px;height:17px;transform:scaleX(0.8719);">5</div>
<div class="t" id="x105" style="left:711.1px;top:149.00px;font-size:10.3px;line-height:17px;height:17px;transform:scaleX(0.8719);">6</div>
<div class="t" id="x106" style="left:760.2px;top:149.00px;font-size:10.3px;line-height:17px;height:17px;transform:scaleX(0.8719);">7</div>
<div class="t" id="x107" style="left:809.3px;top:149.00px;font-size:10.3px;line-height:17px;height:17px;transform:scaleX(0.8719);">8</div>
<div class="t" id="x108" style="left:858.5px;top:149.00px;font-size:10.3px;line-height:17px;height:17px;transform:scaleX(0.8719);">9</div>
<div class="t" id="x109" style="left:904.9px;top:149.00px;font-size:10.3px;line-height:17px;height:17px;transform:scaleX(0.9068);">10</div>
<div class="t" id="x110" style="left:954px;top:149.00px;font-size:10.3px;line-height:17px;height:17px;transform:scaleX(0.9717);">11</div>
<div class="t" id="x111" style="left:1003.2px;top:149.00px;font-size:10.3px;line-height:17px;height:17px;transform:scaleX(0.9068);">12</div>
<div class="t" id="x112" style="left:1052.3px;top:149.00px;font-size:10.3px;line-height:17px;height:17px;transform:scaleX(0.9068);">13</div>
<div class="t" id="x113" style="left:1101.4px;top:149.00px;font-size:10.3px;line-height:17px;height:17px;transform:scaleX(0.9068);">14</div>
<div class="t" id="x114" style="left:1150.5px;top:149.00px;font-size:10.3px;line-height:17px;height:17px;transform:scaleX(0.9155);">15</div>
<div class="t" id="x115" style="left:1248.8px;top:149.00px;font-size:10.3px;line-height:17px;height:17px;transform:scaleX(0.9068);">17</div>
<div class="t" id="x116" style="left:1297.9px;top:149.00px;font-size:10.3px;line-height:17px;height:17px;transform:scaleX(0.9068);">18</div>
<svg style="left:414px;top:157px" width="10" height="14" viewBox="0 0 10 14"><path d="M0.5 5L4.5 0.7L8.5 5V7.5H0.5Z" fill="#fff" stroke="#777"/><path d="M0.5 7.5H8.5V13.5H0.5Z" fill="#fff" stroke="#777"/></svg>
<svg style="left:476px;top:149px" width="10" height="8" viewBox="0 0 10 8"><path d="M0.5 0.5H8.5V2.5L4.5 6.8L0.5 2.5Z" fill="#fff" stroke="#777"/></svg>
<svg style="left:1197px;top:157px" width="10" height="8" viewBox="0 0 10 8"><path d="M0.5 5L4.5 0.7L8.5 5V6.5H0.5Z" fill="#fff" stroke="#777"/></svg>
</div>
<div id="page">
<div class="abs" style="left:294px;top:171px;width:1033px;height:573px;background:#fff;border-left:1px solid #bdbdbd;border-right:1px solid #bdbdbd;"></div>
<div class="abs" style="left:294px;top:507px;width:1033px;height:1px;background:#c6c6c6;"></div>
<div class="abs" style="left:417px;top:184px;width:788px;height:2px;background:#000;"></div>
<div class="abs" style="left:418.4px;top:194.00px;width:783.8px;height:25px;line-height:25px;font-family:'Liberation Serif',serif;font-size:20.8px;color:#000;text-align:justify;text-align-last:justify;white-space:normal">Untuk mempermudah cara perhitungan akan digunakan citra grayscale dengan ukuran 4x4</div>
<svg style="left:0;top:0" width="1369" height="767"><path d="M611.6 215.9L613.3 217.9L615.0 215.9L616.6 217.9L618.3 215.9L620.0 217.9L621.7 215.9L623.4 217.9L625.0 215.9L626.7 217.9L628.4 215.9L630.1 217.9L631.8 215.9L633.4 217.9L635.1 215.9L636.8 217.9L638.5 215.9L640.2 217.9L641.8 215.9L643.5 217.9L645.2 215.9L646.9 217.9L648.6 215.9" fill="none" stroke="#1846e0" stroke-width="1.25" stroke-linejoin="round"/></svg>
<div class="t" id="x117" style="left:419.2px;top:242.00px;font-size:20.8px;color:#000;font-family:'Liberation Serif',serif;line-height:25px;height:25px;">dengan nilai sebagai berikut</div>
<div class="t" id="x118" style="left:418.4px;top:440.00px;font-size:20.8px;color:#000;font-family:'Liberation Serif',serif;line-height:25px;height:25px;transform:scaleX(1.0045);">Hasil normalisasi citra dengan menggunakan teknik min max adalah</div>
<svg style="left:0;top:0" width="1369" height="767"><path d="M418 302.5H669M418 328.5H669M418 354.5H669M418 380.5H669M418 405.5H669M418.5 302V406M481.5 302V406M543.5 302V406M606.5 302V406M668.5 302V406" fill="none" stroke="#8c8c8c" stroke-width="1" stroke-dasharray="3 1" shape-rendering="crispEdges"/></svg>
<div class="t" id="x119" style="left:442px;top:307.00px;font-size:16.8px;color:#000;line-height:21px;height:21px;transform:scaleX(1.0714);">255</div>
<div class="t" id="x120" style="left:504px;top:307.00px;font-size:16.8px;color:#000;line-height:21px;height:21px;transform:scaleX(1.0714);">156</div>
<div class="t" id="x121" style="left:567px;top:307.00px;font-size:16.8px;color:#000;line-height:21px;height:21px;transform:scaleX(1.0714);">153</div>
<div class="t" id="x122" style="left:629px;top:307.00px;font-size:16.8px;color:#000;line-height:21px;height:21px;transform:scaleX(1.0714);">255</div>
<div class="t" id="x123" style="left:442px;top:333.00px;font-size:16.8px;color:#000;line-height:21px;height:21px;transform:scaleX(1.0714);">255</div>
<div class="t" id="x124" style="left:504px;top:333.00px;font-size:16.8px;color:#000;line-height:21px;height:21px;transform:scaleX(1.0714);">133</div>
<div class="t" id="x125" style="left:567px;top:333.00px;font-size:16.8px;color:#000;line-height:21px;height:21px;transform:scaleX(1.0714);">129</div>
<div class="t" id="x126" style="left:629px;top:333.00px;font-size:16.8px;color:#000;line-height:21px;height:21px;transform:scaleX(1.0714);">255</div>
<div class="t" id="x127" style="left:442px;top:359.00px;font-size:16.8px;color:#000;line-height:21px;height:21px;transform:scaleX(1.0714);">170</div>
<div class="t" id="x128" style="left:504px;top:359.00px;font-size:16.8px;color:#000;line-height:21px;height:21px;transform:scaleX(1.0714);">186</div>
<div class="t" id="x129" style="left:567px;top:359.00px;font-size:16.8px;color:#000;line-height:21px;height:21px;transform:scaleX(1.0714);">187</div>
<div class="t" id="x130" style="left:629px;top:359.00px;font-size:16.8px;color:#000;line-height:21px;height:21px;transform:scaleX(1.0714);">173</div>
<div class="t" id="x131" style="left:442px;top:385.00px;font-size:16.8px;color:#000;line-height:21px;height:21px;transform:scaleX(1.0714);">177</div>
<div class="t" id="x132" style="left:504px;top:385.00px;font-size:16.8px;color:#000;line-height:21px;height:21px;transform:scaleX(1.0714);">187</div>
<div class="t" id="x133" style="left:567px;top:385.00px;font-size:16.8px;color:#000;line-height:21px;height:21px;transform:scaleX(1.0714);">182</div>
<div class="t" id="x134" style="left:629px;top:385.00px;font-size:16.8px;color:#000;line-height:21px;height:21px;transform:scaleX(1.0714);">181</div>
<svg style="left:0;top:0" width="1369" height="767"><path d="M418 513.5H1109M418 539.5H1109M418 565.5H1109M418 591.5H1109M418 616.5H1109M418.5 513V617M590.5 513V617M763.5 513V617M935.5 513V617M1108.5 513V617" fill="none" stroke="#8c8c8c" stroke-width="1" stroke-dasharray="3 1" shape-rendering="crispEdges"/></svg>
<div class="t" id="x135" style="left:427.6px;top:517.00px;font-size:16.8px;color:#000;line-height:23px;height:23px;transform:scaleX(1.0369);">(255 – 0) / (255 – 0)</div>
<div class="t" id="x136" style="left:600.6px;top:517.00px;font-size:16.8px;color:#000;line-height:23px;height:23px;transform:scaleX(1.0369);">(156 – 0) / (255 – 0)</div>
<div class="t" id="x137" style="left:772.6px;top:517.00px;font-size:16.8px;color:#000;line-height:23px;height:23px;transform:scaleX(1.0369);">(153 – 0) / (255 – 0)</div>
<div class="t" id="x138" style="left:945.6px;top:517.00px;font-size:16.8px;color:#000;line-height:23px;height:23px;transform:scaleX(1.0369);">(255 – 0) / (255 – 0)</div>
<div class="t" id="x139" style="left:427.6px;top:543.00px;font-size:16.8px;color:#000;line-height:23px;height:23px;transform:scaleX(1.0369);">(255 – 0) / (255 – 0)</div>
<div class="t" id="x140" style="left:600.6px;top:543.00px;font-size:16.8px;color:#000;line-height:23px;height:23px;transform:scaleX(1.0369);">(133 – 0) / (255 – 0)</div>
<div class="t" id="x141" style="left:772.6px;top:543.00px;font-size:16.8px;color:#000;line-height:23px;height:23px;transform:scaleX(1.0369);">(129 – 0) / (255 – 0)</div>
<div class="t" id="x142" style="left:945.6px;top:543.00px;font-size:16.8px;color:#000;line-height:23px;height:23px;transform:scaleX(1.0369);">(255 – 0) / (255 – 0)</div>
<div class="t" id="x143" style="left:427.6px;top:569.00px;font-size:16.8px;color:#000;line-height:23px;height:23px;transform:scaleX(1.0369);">(170 – 0) / (255 – 0)</div>
<div class="t" id="x144" style="left:600.6px;top:569.00px;font-size:16.8px;color:#000;line-height:23px;height:23px;transform:scaleX(1.0369);">(186 – 0) / (255 – 0)</div>
<div class="t" id="x145" style="left:772.6px;top:569.00px;font-size:16.8px;color:#000;line-height:23px;height:23px;transform:scaleX(1.0369);">(187 – 0) / (255 – 0)</div>
<div class="t" id="x146" style="left:945.6px;top:569.00px;font-size:16.8px;color:#000;line-height:23px;height:23px;transform:scaleX(1.0369);">(173 – 0) / (255 – 0)</div>
<div class="t" id="x147" style="left:427.6px;top:595.00px;font-size:16.8px;color:#000;line-height:23px;height:23px;transform:scaleX(1.0369);">(177 – 0) / (255 – 0)</div>
<div class="t" id="x148" style="left:600.6px;top:595.00px;font-size:16.8px;color:#000;line-height:23px;height:23px;transform:scaleX(1.0369);">(187 – 0) / (255 – 0)</div>
<div class="t" id="x149" style="left:772.6px;top:595.00px;font-size:16.8px;color:#000;line-height:23px;height:23px;transform:scaleX(1.0369);">(182 – 0) / (255 – 0)</div>
<div class="t" id="x150" style="left:945.6px;top:595.00px;font-size:16.8px;color:#000;line-height:23px;height:23px;transform:scaleX(1.0369);">(181 – 0) / (255 – 0)</div>
<svg style="left:0;top:0" width="1369" height="767"><path d="M418 675.5H707M418 701.5H707M418 727.5H707M418.5 675V744M490.5 675V744M562.5 675V744M634.5 675V744M706.5 675V744" fill="none" stroke="#8c8c8c" stroke-width="1" stroke-dasharray="3 1" shape-rendering="crispEdges"/></svg>
<div class="abs" style="left:410px;top:670px;width:310px;height:74px;overflow:hidden">
<div class="t" id="x151" style="left:62px;top:10.00px;font-size:16.8px;color:#000;line-height:21px;height:21px;transform:scaleX(1.0060);">1</div>
<div class="t" id="x152" style="left:89px;top:10.00px;font-size:16.8px;color:#000;line-height:21px;height:21px;transform:scaleX(1.0860);">0.6118</div>
<div class="t" id="x153" style="left:190.3px;top:10.00px;font-size:16.8px;color:#000;line-height:21px;height:21px;transform:scaleX(1.0752);">0.6</div>
<div class="t" id="x154" style="left:278px;top:10.00px;font-size:16.8px;color:#000;line-height:21px;height:21px;transform:scaleX(1.0060);">1</div>
<div class="t" id="x155" style="left:62px;top:36.00px;font-size:16.8px;color:#000;line-height:21px;height:21px;transform:scaleX(1.0060);">1</div>
<div class="t" id="x156" style="left:89px;top:36.00px;font-size:16.8px;color:#000;line-height:21px;height:21px;transform:scaleX(1.0598);">0.5216</div>
<div class="t" id="x157" style="left:161px;top:36.00px;font-size:16.8px;color:#000;line-height:21px;height:21px;transform:scaleX(1.0598);">0.5059</div>
<div class="t" id="x158" style="left:278px;top:36.00px;font-size:16.8px;color:#000;line-height:21px;height:21px;transform:scaleX(1.0060);">1</div>
<div class="t" id="x159" style="left:17px;top:62.00px;font-size:16.8px;color:#000;line-height:21px;height:21px;transform:scaleX(1.0598);">0.6667</div>
<div class="t" id="x160" style="left:89px;top:62.00px;font-size:16.8px;color:#000;line-height:21px;height:21px;transform:scaleX(1.0598);">0.7294</div>
<div class="t" id="x161" style="left:161px;top:62.00px;font-size:16.8px;color:#000;line-height:21px;height:21px;transform:scaleX(1.0598);">0.7333</div>
<div class="t" id="x162" style="left:233px;top:62.00px;font-size:16.8px;color:#000;line-height:21px;height:21px;transform:scaleX(1.0598);">0.6784</div>
</div>
</div>
<div id="vscroll">
<div class="abs" style="left:1352px;top:147px;width:16px;height:597px;background:linear-gradient(180deg,#f6f6f6 0%,#ececec 100%);"></div>
<div class="abs" style="left:1352px;top:149px;width:15px;height:15px;background:#fff;border:1px solid #ababab;"></div>
<svg style="left:1356px;top:154.5px" width="7" height="4" viewBox="0 0 7 4"><path d="M0 4L3.5 0L7 4Z" fill="#777"/></svg>
<div class="abs" style="left:1352px;top:308px;width:15px;height:17px;background:#fff;border:1px solid #ababab;"></div>
<div class="abs" style="left:1352px;top:728px;width:15px;height:15px;background:#fff;border:1px solid #ababab;"></div>
<svg style="left:1356px;top:733.5px" width="7" height="4" viewBox="0 0 7 4"><path d="M0 0H7L3.5 4Z" fill="#777"/></svg>
</div>
</div>
<!-- STATUS BAR -->
<div id="statusbar">
<div class="abs" style="left:0px;top:744px;width:1369px;height:23px;background:#2b579a;"></div>
<div class="t" id="x163" style="left:7.846px;top:747.00px;font-size:11.8px;color:#fff;transform:scaleX(0.8907);">PAGE 8 OF 30</div>
<div class="t" id="x164" style="left:96.046px;top:747.00px;font-size:11.8px;color:#fff;transform:scaleX(0.9085);">7827 WORDS</div>
<svg style="left:184px;top:748px" width="15" height="14" viewBox="0 0 15 14"><path d="M6.5 0.5H0.5V10.5H6.5M6.5 0.5H13M6.5 10.5H13M6.5 0.5V11.5" fill="none" stroke="#fff" stroke-width="1"/><path d="M5 11L6.5 13L8 11Z" fill="#fff"/><path d="M9.3 3.3L13.8 8.2M13.8 3.3L9.3 8.2" stroke="#fff" stroke-width="1.5"/></svg>
<div class="t" id="x165" style="left:214.946px;top:747.00px;font-size:11.8px;color:#fff;transform:scaleX(0.8383);">ENGLISH (UNITED STATES)</div>
<svg style="left:364px;top:748px" width="14" height="13" viewBox="0 0 14 13"><path d="M5.5 1H12.5V3H5.5Z" fill="#fff"/><path d="M1.5 6V12.5H12.5V1.5" fill="none" stroke="#fff" stroke-width="1"/><circle cx="3" cy="3.1" r="3" fill="#f0f0f0"/><path d="M4 6.7H6M7 6.7H9M10 6.7H11.6M4 8.7H6M7 8.7H9M10 8.7H11.6M4 10.7H6M7 10.7H9M10 10.7H11.6" stroke="#fff" stroke-width="1.1"/></svg>
<svg style="left:1077px;top:748px" width="14" height="14" viewBox="0 0 14 14"><path d="M0.7 0.7H12.3V10.8H0.7Z" fill="none" stroke="#fff" stroke-width="1.4"/><path d="M6.5 0V11.5" stroke="#fff" stroke-width="1.2"/><path d="M4.8 10.8L6.5 13.2L8.2 10.8Z" fill="#fff"/><path d="M2 2.7H5.4M2 4.5H5.4M2 6.3H5.4M2 8.1H5.4M7.6 2.7H11M7.6 4.5H11M7.6 6.3H11M7.6 8.1H11" stroke="#fff" stroke-width="0.9"/></svg>
<div class="abs" style="left:1103px;top:744px;width:38px;height:23px;background:#19478a;"></div>
<svg style="left:1115px;top:748px" width="14" height="13" viewBox="0 0 14 13"><path d="M0.7 0.7H13.3V12.3H0.7Z" fill="none" stroke="#fff" stroke-width="1.4"/><path d="M2.5 2.8H11.5M2.5 4.7H11.5M2.5 6.6H11.5M2.5 8.5H11.5M2.5 10.4H11.5" stroke="#fff" stroke-width="0.9"/></svg>
<svg style="left:1153px;top:748px" width="16" height="14" viewBox="0 0 16 14"><path d="M11.3 5V0.7H0.7V10.3H6" fill="none" stroke="#fff" stroke-width="1.4"/><path d="M2.3 2.7H9.7M2.3 4.6H8M2.3 6.5H6.5M2.3 8.4H5.5" stroke="#fff" stroke-width="1"/><circle cx="10.6" cy="9" r="4.1" fill="#e8e8e8"/><path d="M8 7.5Q9.8 8.8 9.4 12M11.5 5.5Q12.4 8 14.3 8.2" stroke="#2b579a" stroke-width="1.1" fill="none"/></svg>
<div class="abs" style="left:1184px;top:754px;width:6px;height:2px;background:#fff;"></div>
<div class="abs" style="left:1194px;top:755px;width:100px;height:1px;background:#fff;"></div>
<div class="abs" style="left:1244px;top:751px;width:1px;height:9px;background:#fff;"></div>
<div class="abs" style="left:1246px;top:749px;width:4px;height:11px;background:#fff;"></div>
<div class="abs" style="left:1298px;top:754px;width:8px;height:2px;background:#fff;"></div>
<div class="abs" style="left:1301px;top:751px;width:2px;height:8px;background:#fff;"></div>
<div class="t" id="x166" style="left:1321.65px;top:747.00px;font-size:11.8px;color:#fff;transform:scaleX(0.8947);">130%</div>
</div>
<!-- FRAME -->
<div class="abs" style="left:0px;top:0px;width:1369px;height:1px;background:#2b579a;"></div>
<div class="abs" style="left:0px;top:0px;width:1px;height:767px;background:#2b579a;"></div>
<div class="abs" style="left:1368px;top:0px;width:1px;height:767px;background:#2b579a;"></div>
</div>
</body>
</html>
